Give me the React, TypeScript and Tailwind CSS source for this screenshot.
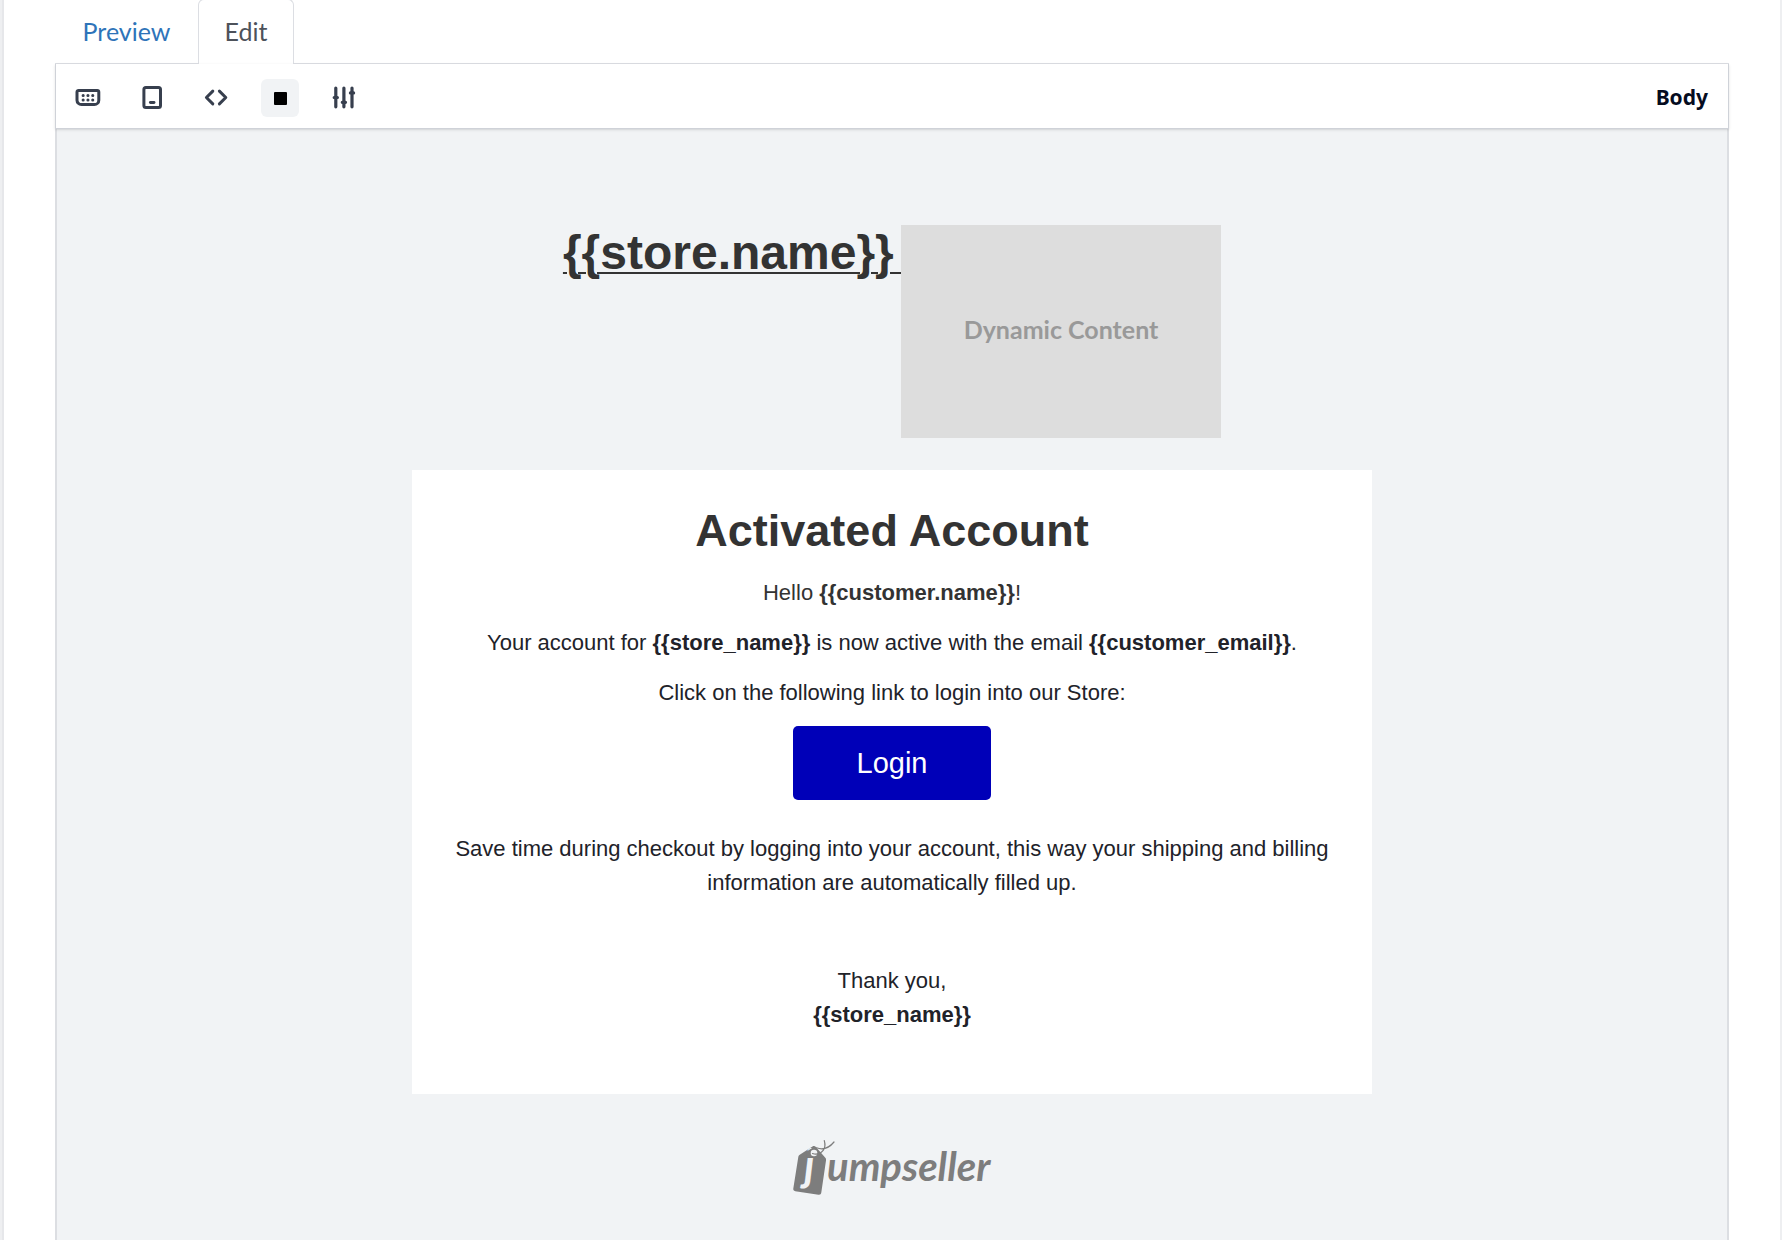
import type { ReactNode } from "react";

function Tool({ label, active, children }: { label: string; active?: boolean; children: ReactNode }) {
  return (
    <button
      type="button"
      aria-label={label}
      aria-pressed={!!active}
      className={`flex size-[38px] items-center justify-center rounded-md text-[#373f4e] ${active ? "bg-[#f1f3f5]" : ""}`}
    >
      {children}
    </button>
  );
}

function KeyboardIcon() {
  return (
    <svg viewBox="0 0 28 28" className="size-7" fill="none" stroke="currentColor" aria-hidden="true">
      <path
        d="M4.6 6.4h18.6a1.6 1.6 0 0 1 1.6 1.6v8.2a4.4 4.4 0 0 1-4.4 4.4H7.4A4.4 4.4 0 0 1 3 16.2V8a1.6 1.6 0 0 1 1.6-1.6z"
        strokeWidth="3"
      />
      <path d="M9.1 11.4h.1M13.9 11.4h.1M18.7 11.4h.1M9.1 15.9h.1M13.9 15.9h.1M18.7 15.9h.1" strokeWidth="3" strokeLinecap="round" />
    </svg>
  );
}

function TabletIcon() {
  return (
    <svg viewBox="0 0 28 28" className="size-7" fill="none" stroke="currentColor" aria-hidden="true">
      <rect x="5.9" y="3.500" width="16.6" height="20" rx="2" strokeWidth="3" />
      <path d="M12.4 18.500h3.600" strokeWidth="2.900" strokeLinecap="round" />
    </svg>
  );
}

function CodeIcon() {
  return (
    <svg viewBox="0 0 28 28" className="size-7" fill="none" stroke="currentColor" strokeWidth="3" strokeLinecap="round" strokeLinejoin="round" aria-hidden="true">
      <path d="M10.800 7.100 4.400 13.500l6.400 6.400M17.400 7.100l6.400 6.400-6.400 6.400" />
    </svg>
  );
}

function SlidersIcon() {
  return (
    <svg viewBox="0 0 28 28" className="size-7" fill="none" stroke="currentColor" strokeWidth="3.200" strokeLinecap="round" aria-hidden="true">
      <path d="M5.800 4v18.800M13.900 4v18.800M22 4v18.800" />
      <path d="M4.200 13.500h3.200M12.300 18.300h3.200M20.400 8.900h3.200" />
    </svg>
  );
}

function Logo() {
  return (
    <svg viewBox="0 0 200 60" className="h-[60px] w-[200px]" role="img" aria-label="jumpseller">
      <path
        d="M20.500 10.600c1.300-.8 2.400-.6 3.400.5l9.200 10.400c.9 1 1.100 1.700.9 2.900l-4.700 32.200c-.3 1.700-1.200 2.300-2.800 2.100L3.300 55.200c-1.600-.2-2.200-1-2-2.600l5-31.500c.2-1.200.8-1.800 1.800-2.500z"
        fill="#7d7d7d"
      />
      <text x="12" y="45" fontSize="43" className="fill-[#f1f3f5] font-[Lato] font-bold italic">
        j
      </text>
      <path d="M14.500 15.500l7.500-4.500 9 10.200H14.500z" fill="#7d7d7d" />
      <circle cx="22" cy="17" r="3.300" fill="#f1f3f5" />
      <path
        d="M20.500 17.500c4.500 1.500 8.500-.5 10.700-3.200 1.900-2.400 2.100-6.100 1.100-9.600M24.500 11.800c6.500 2.500 12.500.2 17.500-5.800"
        fill="none"
        stroke="#7d7d7d"
        strokeWidth="1.200"
        strokeLinecap="round"
      />
      <text x="35" y="45" fontSize="40" className="fill-[#7d7d7d] font-[Lato] font-bold italic">
        umpseller
      </text>
    </svg>
  );
}

export default function App() {
  return (
    <div className="flex min-h-screen flex-col border-x-2 border-[#eeeff1] bg-white font-['Liberation_Sans',Arial,sans-serif]">
      <div className="flex flex-1 flex-col border-l-2 border-[#e6e7ea] pr-[51px] pl-[51px]">
        <nav className="flex h-16 border-b border-[#dcdee3] font-[Lato,sans-serif] text-[25px]" aria-label="Template view">
          <a href="#preview" className="flex w-[143px] items-center justify-center text-[#2e74b9]">
            Preview
          </a>
          <a
            href="#edit"
            aria-current="page"
            className="-my-px flex w-24 items-center justify-center rounded-t-md border border-b-0 border-[#dcdee3] bg-white text-[#4d525a]"
          >
            Edit
          </a>
        </nav>
        <header className="z-10 flex h-[65px] items-center justify-between border-x border-b border-[#cfd2d8] pt-1 pr-5 pl-[13px] shadow-sm">
          <div className="flex gap-[26px]">
            <Tool label="Keyboard"><KeyboardIcon /></Tool>
            <Tool label="Device preview"><TabletIcon /></Tool>
            <Tool label="Code"><CodeIcon /></Tool>
            <Tool label="Outline" active>
              <span className="size-[13px] rounded-[1px] bg-black" />
            </Tool>
            <Tool label="Settings"><SlidersIcon /></Tool>
          </div>
          <span className="font-['Noto_Sans',sans-serif] text-[21px] font-bold text-[#050c1f]">Body</span>
        </header>
        <main className="flex flex-1 flex-col items-center border-x-2 border-[#dcdee2] bg-[#f1f3f5] pt-24">
          <div className="flex items-start">
            <h1 className="text-[48px] leading-[56px] font-bold whitespace-pre text-[#333] underline decoration-2 underline-offset-3">
              {"{{store.name}} "}
            </h1>
            <div className="-ml-1.5 flex h-[213px] w-80 items-center justify-center bg-[#ddd] pb-1 font-[Lato,sans-serif] text-[25px] font-bold text-[#999]">
              Dynamic Content
            </div>
          </div>
          <section className="mt-8 flex w-full max-w-[960px] flex-col items-center bg-white px-8 pt-[34px] pb-[62px] text-center text-[22px] leading-[34px] text-[#212229]">
            <h2 className="text-[45px] leading-[54px] font-bold text-[#333]">Activated Account</h2>
            <p className="mt-[18px] text-[#333]">
              Hello <strong>{"{{customer.name}}"}</strong>!
            </p>
            <p className="mt-4">
              Your account for <strong>{"{{store_name}}"}</strong> is now active with the email <strong>{"{{customer_email}}"}</strong>.
            </p>
            <p className="mt-4">Click on the following link to login into our Store:</p>
            <a href="#login" className="mt-4 flex h-[74px] w-[198px] items-center justify-center rounded-[5px] bg-[#0000b8] text-[29px] text-white">
              Login
            </a>
            <p className="mt-8">
              Save time during checkout by logging into your account, this way your shipping and billing information are automatically filled up.
            </p>
            <p className="mt-16">
              Thank you,
              <br />
              <strong>{"{{store_name}}"}</strong>
            </p>
          </section>
          <footer className="mt-[42px]">
            <Logo />
          </footer>
        </main>
      </div>
    </div>
  );
}
